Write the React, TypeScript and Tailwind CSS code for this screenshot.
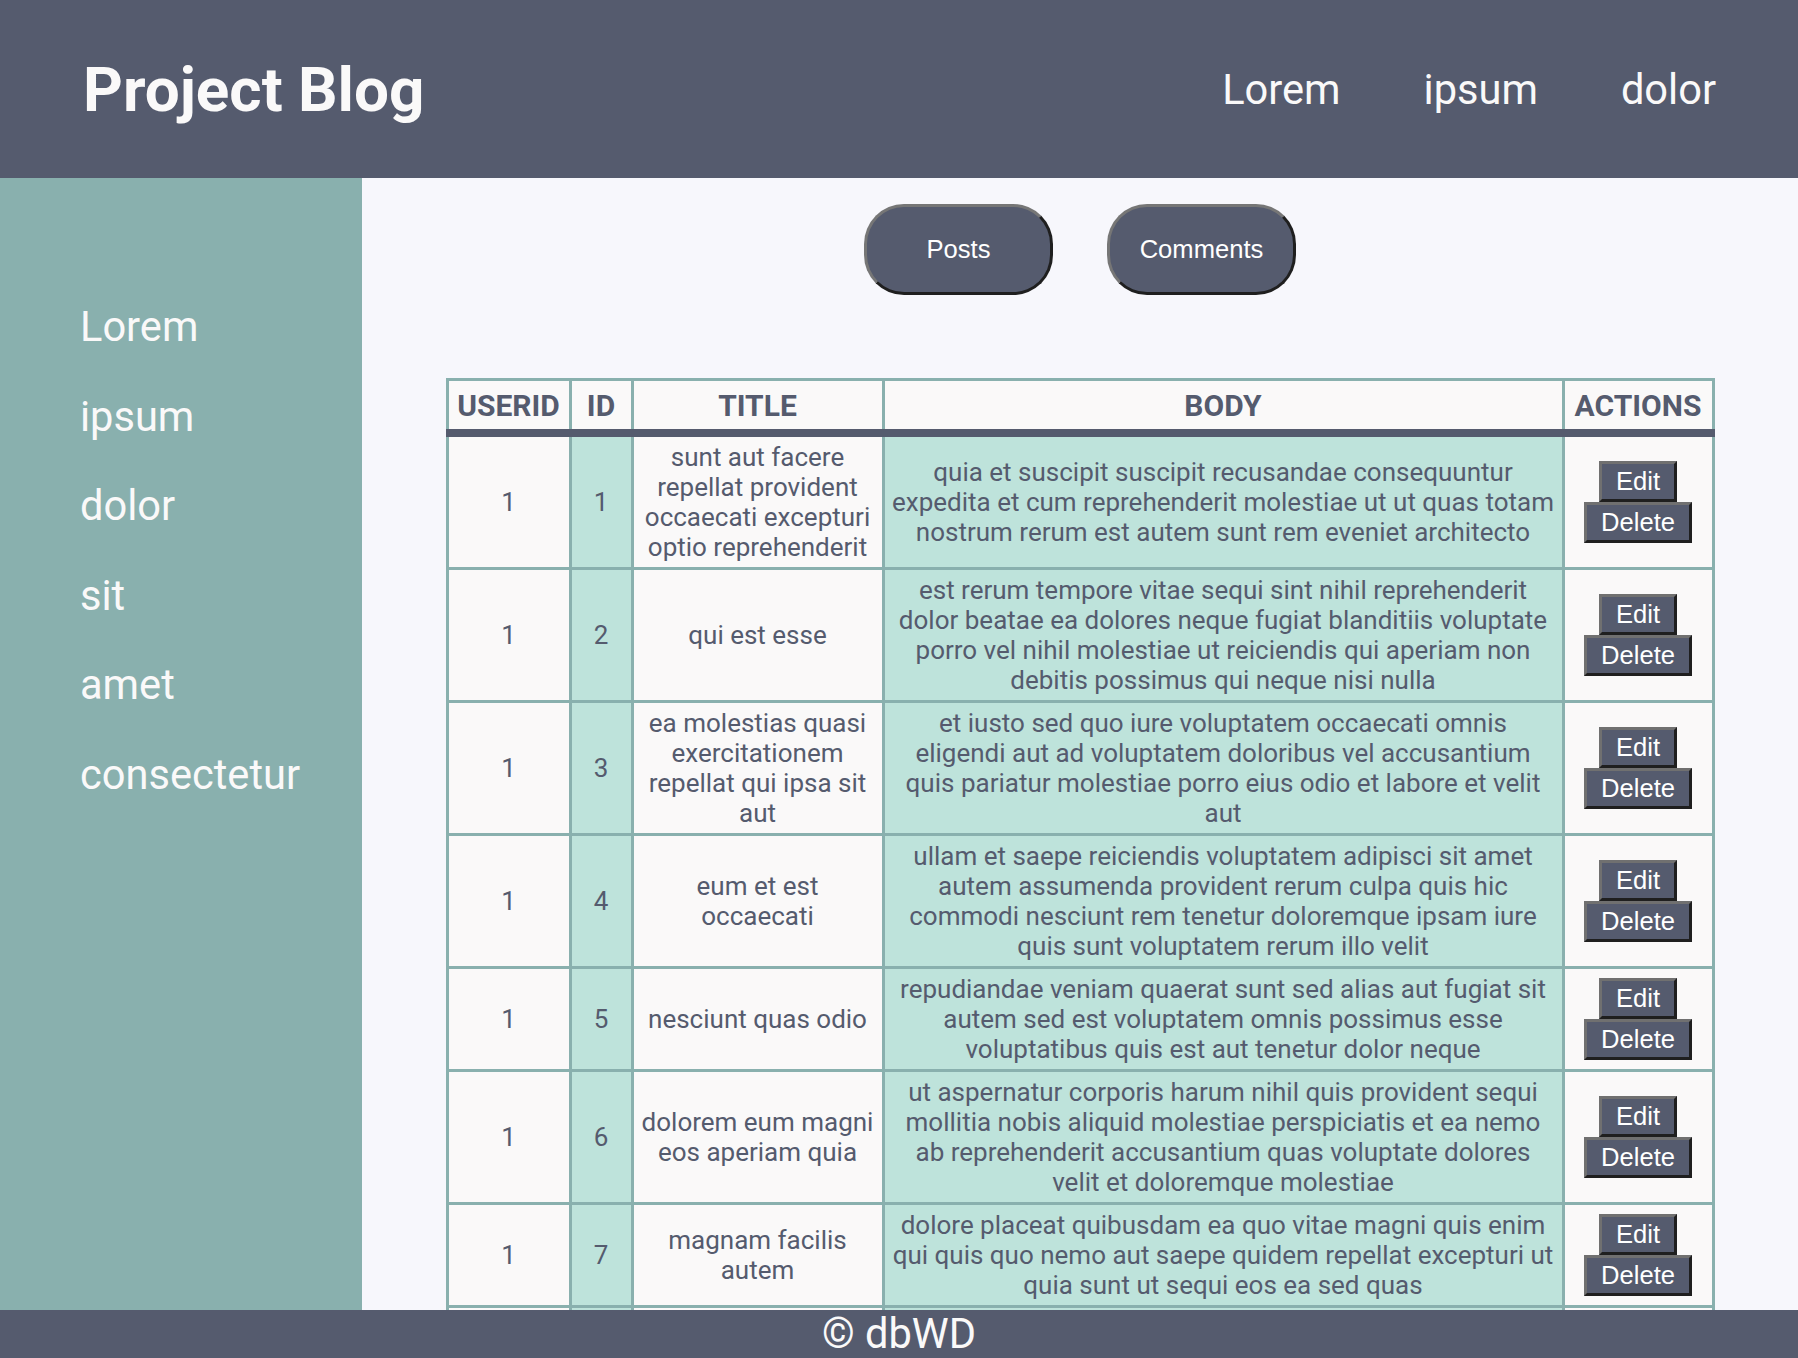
import React from "react";

// 게시글 데이터 (jsonplaceholder posts)
interface Post {
  userId: number;
  id: number;
  title: string;
  body: string;
}

const posts: Post[] = [
  {
    userId: 1,
    id: 1,
    title: "sunt aut facere repellat provident occaecati excepturi optio reprehenderit",
    body: "quia et suscipit suscipit recusandae consequuntur expedita et cum reprehenderit molestiae ut ut quas totam nostrum rerum est autem sunt rem eveniet architecto",
  },
  {
    userId: 1,
    id: 2,
    title: "qui est esse",
    body: "est rerum tempore vitae sequi sint nihil reprehenderit dolor beatae ea dolores neque fugiat blanditiis voluptate porro vel nihil molestiae ut reiciendis qui aperiam non debitis possimus qui neque nisi nulla",
  },
  {
    userId: 1,
    id: 3,
    title: "ea molestias quasi exercitationem repellat qui ipsa sit aut",
    body: "et iusto sed quo iure voluptatem occaecati omnis eligendi aut ad voluptatem doloribus vel accusantium quis pariatur molestiae porro eius odio et labore et velit aut",
  },
  {
    userId: 1,
    id: 4,
    title: "eum et est occaecati",
    body: "ullam et saepe reiciendis voluptatem adipisci sit amet autem assumenda provident rerum culpa quis hic commodi nesciunt rem tenetur doloremque ipsam iure quis sunt voluptatem rerum illo velit",
  },
  {
    userId: 1,
    id: 5,
    title: "nesciunt quas odio",
    body: "repudiandae veniam quaerat sunt sed alias aut fugiat sit autem sed est voluptatem omnis possimus esse voluptatibus quis est aut tenetur dolor neque",
  },
  {
    userId: 1,
    id: 6,
    title: "dolorem eum magni eos aperiam quia",
    body: "ut aspernatur corporis harum nihil quis provident sequi mollitia nobis aliquid molestiae perspiciatis et ea nemo ab reprehenderit accusantium quas voluptate dolores velit et doloremque molestiae",
  },
  {
    userId: 1,
    id: 7,
    title: "magnam facilis autem",
    body: "dolore placeat quibusdam ea quo vitae magni quis enim qui quis quo nemo aut saepe quidem repellat excepturi ut quia sunt ut sequi eos ea sed quas",
  },
  {
    userId: 1,
    id: 8,
    title: "dolorem dolore est ipsam",
    body: "dignissimos aperiam dolorem qui eum facilis quibusdam animi sint suscipit qui sint possimus cum quaerat magni maiores excepturi ipsam ut commodi dolor voluptatum modi aut vitae",
  },
  {
    userId: 1,
    id: 9,
    title: "nesciunt iure omnis dolorem tempora et accusantium",
    body: "consectetur animi nesciunt iure dolore enim quia ad veniam autem ut quam aut nobis et est aut quod aut provident voluptas autem voluptas",
  },
];

const headerLinks = ["Lorem", "ipsum", "dolor"];
const sideLinks = ["Lorem", "ipsum", "dolor", "sit", "amet", "consectetur"];

export default function App() {
  return (
    <div className="h-screen flex flex-col overflow-hidden font-['Roboto',sans-serif]">
      {/* 상단 헤더 */}
      <header className="h-[178px] shrink-0 bg-[#555b6e] flex items-center justify-between pl-[83px] pr-[82px] text-[#faf9f9]">
        <h1 className="text-[62px] font-bold leading-[75px]">Project Blog</h1>
        <nav className="flex gap-[83px] text-[41.6px] leading-[47px]">
          {headerLinks.map((l) => (
            <a key={l} className="cursor-pointer">{l}</a>
          ))}
        </nav>
      </header>

      <div className="flex flex-1 min-h-0">
        {/* 사이드바 */}
        <aside className="w-[362px] shrink-0 bg-[#89b0ae] pt-[125px] pl-[80px]">
          <ul className="flex flex-col gap-[42.5px] text-[41.6px] leading-[47px] text-[#faf9f9]">
            {sideLinks.map((l) => (
              <li key={l}>{l}</li>
            ))}
          </ul>
        </aside>

        <main className="flex-1 bg-[#f7f7fc] overflow-hidden">
          <div className="flex justify-center gap-[54px] pt-[26px] font-['Liberation_Sans',Arial,sans-serif]">
            <TabButton label="Posts" />
            <TabButton label="Comments" />
          </div>

          <table className="mx-auto mt-[83px] w-[1266px] table-fixed border-collapse border-[3px] border-[#89b0ae] text-[#555b6e]">
            <colgroup>
              <col className="w-[123px]" />
              <col className="w-[62px]" />
              <col className="w-[251px]" />
              <col className="w-[680px]" />
              <col className="w-[150px]" />
            </colgroup>
            <thead>
              <tr className="border-b-[8px] border-b-[#555b6e] bg-[#faf9f9]">
                {["USERID", "ID", "TITLE", "BODY", "ACTIONS"].map((h) => (
                  <th key={h} className="border-[3px] border-[#89b0ae] pt-[7px] pb-[6px] text-[30px] font-bold leading-[35px] text-center">
                    {h}
                  </th>
                ))}
              </tr>
            </thead>
            <tbody className="text-[26px] leading-[30px]">
              {posts.map((p) => (
                <tr key={p.id}>
                  <td className="border-[3px] border-[#89b0ae] bg-[#faf9f9] px-[6px] py-[5px] text-center">{p.userId}</td>
                  <td className="border-[3px] border-[#89b0ae] bg-[#bee3db] px-[6px] py-[5px] text-center">{p.id}</td>
                  <td className="border-[3px] border-[#89b0ae] bg-[#faf9f9] px-[6px] py-[5px] text-center">{p.title}</td>
                  <td className="border-[3px] border-[#89b0ae] bg-[#bee3db] px-[7px] py-[5px] text-center">{p.body}</td>
                  <td className="border-[3px] border-[#89b0ae] bg-[#faf9f9] px-[6px] py-[5px]">
                    <div className="flex flex-col items-center font-['Liberation_Sans',Arial,sans-serif]">
                      <ActionButton label="Edit" />
                      <ActionButton label="Delete" />
                    </div>
                  </td>
                </tr>
              ))}
            </tbody>
          </table>
        </main>
      </div>

      <footer className="h-[48px] shrink-0 bg-[#555b6e] flex items-center justify-center text-[41.6px] leading-[48px] text-[#faf9f9]">
        © dbWD
      </footer>
    </div>
  );
}

function TabButton({ label }: { label: string }) {
  return (
    <button className="w-[189px] h-[91px] rounded-[40px] bg-[#555b6e] text-[25.6px] text-white border-[3px] border-t-[#767676] border-l-[#767676] border-b-[#1f1f1f] border-r-[#1f1f1f] cursor-pointer">
      {label}
    </button>
  );
}

function ActionButton({ label }: { label: string }) {
  return (
    <button className="bg-[#555b6e] text-white text-[25.6px] leading-[29.4px] px-[14px] py-[3px] border-[3px] border-t-[#707070] border-l-[#707070] border-b-[#1f1f1f] border-r-[#1f1f1f] cursor-pointer">
      {label}
    </button>
  );
}
